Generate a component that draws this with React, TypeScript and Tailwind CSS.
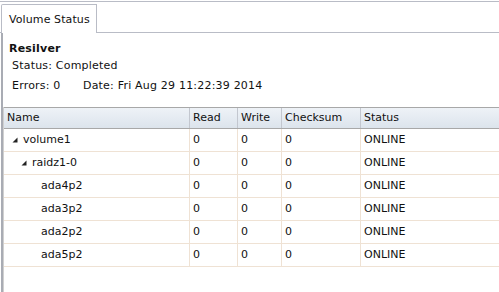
import React from "react";

type Row = {
  name: string;
  level: number;
  expanded?: boolean;
  read: string;
  write: string;
  checksum: string;
  status: string;
};

const rows: Row[] = [
  { name: "volume1", level: 0, expanded: true, read: "0", write: "0", checksum: "0", status: "ONLINE" },
  { name: "raidz1-0", level: 1, expanded: true, read: "0", write: "0", checksum: "0", status: "ONLINE" },
  { name: "ada4p2", level: 2, read: "0", write: "0", checksum: "0", status: "ONLINE" },
  { name: "ada3p2", level: 2, read: "0", write: "0", checksum: "0", status: "ONLINE" },
  { name: "ada2p2", level: 2, read: "0", write: "0", checksum: "0", status: "ONLINE" },
  { name: "ada5p2", level: 2, read: "0", write: "0", checksum: "0", status: "ONLINE" },
];

const indents = ["pl-[8px]", "pl-[17px]", "pl-[37px]"];

function Expander() {
  return (
    <svg width="6" height="6" viewBox="0 0 6 6" className="mr-[5px] shrink-0">
      <polygon points="5.5,0.5 5.5,5.5 0.5,5.5" fill="#222" />
    </svg>
  );
}

export default function App() {
  return (
    <div
      className="w-[499px] h-[292px] bg-white overflow-hidden text-[11px] text-[#111] flex flex-col pt-px"
      style={{ fontFamily: '"DejaVu Sans", Verdana, sans-serif' }}
    >
      {/* Tab strip */}
      <div className="border-t border-[#b9bcc6] h-[32px] flex items-end relative">
        <div className="absolute left-0 right-0 bottom-0 border-b border-[#b9bcc6]" />
        <div className="relative ml-px w-[96px] h-[29px] border-l border-t border-r border-[#b9bcc6] rounded-tl-[2px] bg-white pl-[7px] leading-[29px] tracking-[0.1px]">
          Volume Status
        </div>
      </div>

      {/* Panel body */}
      <div className="flex-1 ml-px border-l-2 border-[#a9acb4] flex flex-col">
        <div className="pt-[9px] pl-[6px] h-[74px] tracking-[0.2px]">
          <div className="font-bold leading-[14px]">Resilver</div>
          <div className="pl-[3px] mt-[3px] leading-[14px]">Status: Completed</div>
          <div className="pl-[3px] mt-[6px] leading-[14px] flex">
            <span className="w-[71px]">Errors: 0</span>
            <span>Date: Fri Aug 29 11:22:39 2014</span>
          </div>
        </div>

        {/* Grid */}
        <div className="flex-1 border-l border-[#d0d0d0]">
          <div className="flex h-[22px] border-t border-b border-[#a8a8a8] bg-gradient-to-b from-[#eef2f7] to-[#dce4ec] leading-[20px]">
            <div className="w-[186px] pl-[3px] border-r border-[#c3c7cf]">Name</div>
            <div className="w-[48px] pl-[3px] border-r border-[#c3c7cf]">Read</div>
            <div className="w-[44px] pl-[3px] border-r border-[#c3c7cf]">Write</div>
            <div className="w-[79px] pl-[3px] border-r border-[#c3c7cf]">Checksum</div>
            <div className="flex-1 pl-[3px]">Status</div>
          </div>
          {rows.map((r) => (
            <div key={r.name} className="flex h-[23px] border-b border-[#efe2d4] leading-[22px]">
              <div className={`w-[186px] border-r border-[#efe2d4] flex items-center ${indents[r.level]}`}>
                {r.expanded && <Expander />}
                <span>{r.name}</span>
              </div>
              <div className="w-[48px] pl-[3px] border-r border-[#efe2d4]">{r.read}</div>
              <div className="w-[44px] pl-[3px] border-r border-[#efe2d4]">{r.write}</div>
              <div className="w-[79px] pl-[3px] border-r border-[#efe2d4]">{r.checksum}</div>
              <div className="flex-1 pl-[3px]">{r.status}</div>
            </div>
          ))}
        </div>
      </div>
    </div>
  );
}
